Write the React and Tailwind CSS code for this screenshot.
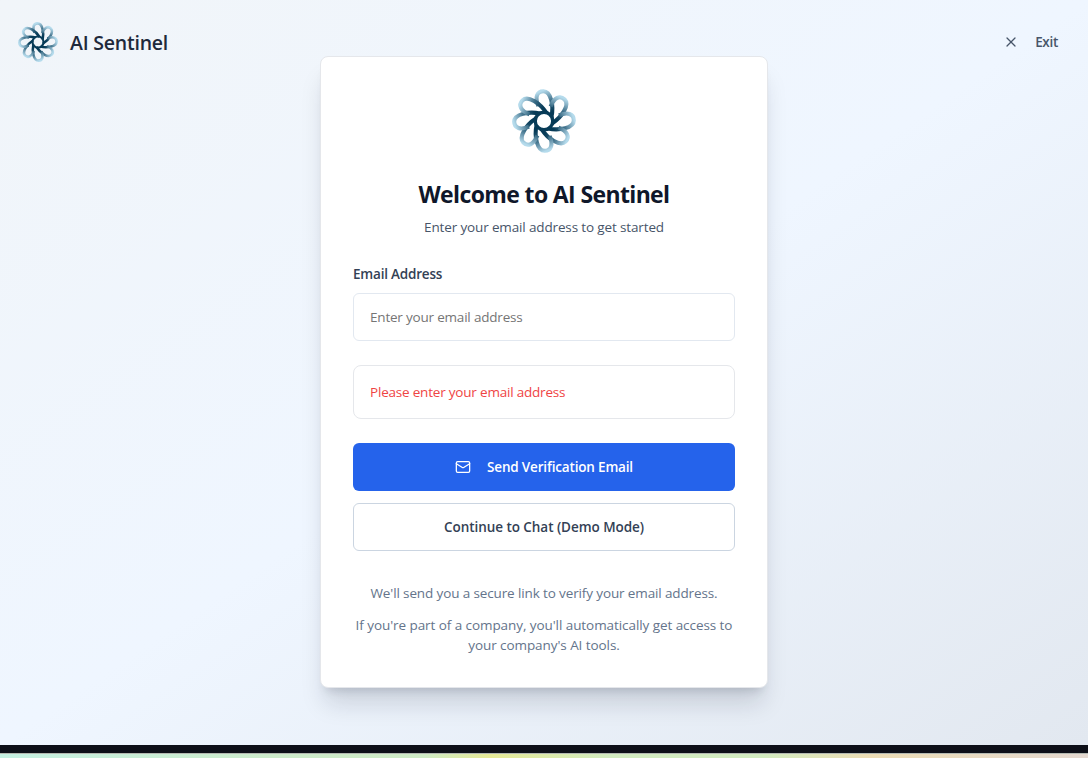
import React from "react";
import { Mail, X } from "lucide-react";

const PETALS = [0, 45, 90, 135, 180, 225, 270, 315];

function Logo({ id, className }) {
  return (
    <svg className={className} viewBox="0 0 64 64" fill="none" aria-hidden="true">
      <defs>
        <linearGradient id={id} gradientUnits="userSpaceOnUse" x1="38" y1="23" x2="30" y2="2">
          <stop offset="0" stopColor="#073b57" />
          <stop offset="0.45" stopColor="#3a6c86" />
          <stop offset="0.75" stopColor="#7fa9be" />
          <stop offset="1" stopColor="#b5dbec" />
        </linearGradient>
      </defs>
      {PETALS.map((angle) => (
        <path
          key={angle}
          d="M26.4 17C22.6 8.5 24.8 2.2 31.4 2.2C38.8 2.2 42 16.5 39.4 28"
          stroke={`url(#${id})`}
          strokeWidth="4.1"
          transform={`rotate(${angle} 32 32)`}
        />
      ))}
      <circle cx="32" cy="32" r="8.8" stroke="#073b57" strokeWidth="3.4" />
    </svg>
  );
}

export default function App() {
  return (
    <div className="flex h-[758px] flex-col overflow-hidden font-['Open_Sans','Noto_Sans',sans-serif] text-[13.5px] leading-5">
      <div className="relative flex h-[745px] shrink-0 flex-col items-center bg-linear-to-br from-[#f1f5f9] via-[#eff6ff] via-50% to-[#e2e8f0] pt-14">
        <header className="absolute inset-x-0 top-0 flex items-center justify-between pt-[22px] pr-[30px] pl-[18px]">
          <div className="flex items-center gap-3">
            <Logo id="petal-small" className="size-10" />
            <span className="pt-0.5 text-[19.5px] leading-7 font-semibold tracking-[-0.22px] text-[#1e293b]">AI Sentinel</span>
          </div>
          <button className="flex items-center gap-4 font-semibold tracking-[-0.3px] text-[#475569]">
            <X className="size-4" strokeWidth={1.9} />
            Exit
          </button>
        </header>

        <main className="relative flex h-[632px] w-[448px] flex-col rounded-lg border border-[#e5e7eb] bg-white px-8 pt-8 shadow-xl shadow-slate-900/15">
          <Logo id="petal-large" className="size-16 self-center" />
          <h1 className="mt-[25px] text-center text-[23px] leading-8 font-bold tracking-[-0.63px] text-[#0f172a]">
            Welcome to AI Sentinel
          </h1>
          <p className="mt-[7px] text-center tracking-[-0.14px] text-[#475569]">Enter your email address to get started</p>

          <label htmlFor="email" className="mt-[27px] font-semibold tracking-[-0.2px] text-[#334155]">
            Email Address
          </label>
          <input
            id="email"
            type="email"
            placeholder="Enter your email address"
            className="mt-[9px] h-12 shrink-0 rounded-md border border-[#e2e8f0] px-4 tracking-[-0.2px] placeholder:text-[#757575]"
          />
          <div className="mt-6 flex h-[54px] shrink-0 items-center rounded-lg border border-[#e5e7eb] px-4 tracking-[-0.2px] text-[#ef4444]">
            Please enter your email address
          </div>
          <button className="mt-6 flex h-12 shrink-0 items-center justify-center gap-4 rounded-md bg-[#2563eb] font-semibold tracking-[-0.17px] text-white">
            <Mail className="size-4" strokeWidth={1.9} />
            Send Verification Email
          </button>
          <button className="mt-3 h-12 shrink-0 rounded-md border border-[#cbd5e1] font-semibold tracking-[-0.05px] text-[#334155]">
            Continue to Chat (Demo Mode)
          </button>

          <div className="mt-8 -mx-1 text-center text-[#64748b]">
            <p className="tracking-[-0.125px]">We'll send you a secure link to verify your email address.</p>
            <p className="mt-3 tracking-[-0.07px]">
              If you're part of a company, you'll automatically get access to
              <br />
              your company's AI tools.
            </p>
          </div>
        </main>
      </div>
      <div className="h-2 shrink-0 bg-[#0d0f18]" />
      <div className="h-px shrink-0 bg-[#b4b9b2]" />
      <div className="h-1 shrink-0 bg-[linear-gradient(90deg,#c5f0e2_0%,#cdebcb_25%,#cfebc6_39%,#e6e996_45%,#d2ebc0_56%,#d2ebc0_70%,#ecdcb4_80%,#e4d8d0_100%)]" />
    </div>
  );
}
